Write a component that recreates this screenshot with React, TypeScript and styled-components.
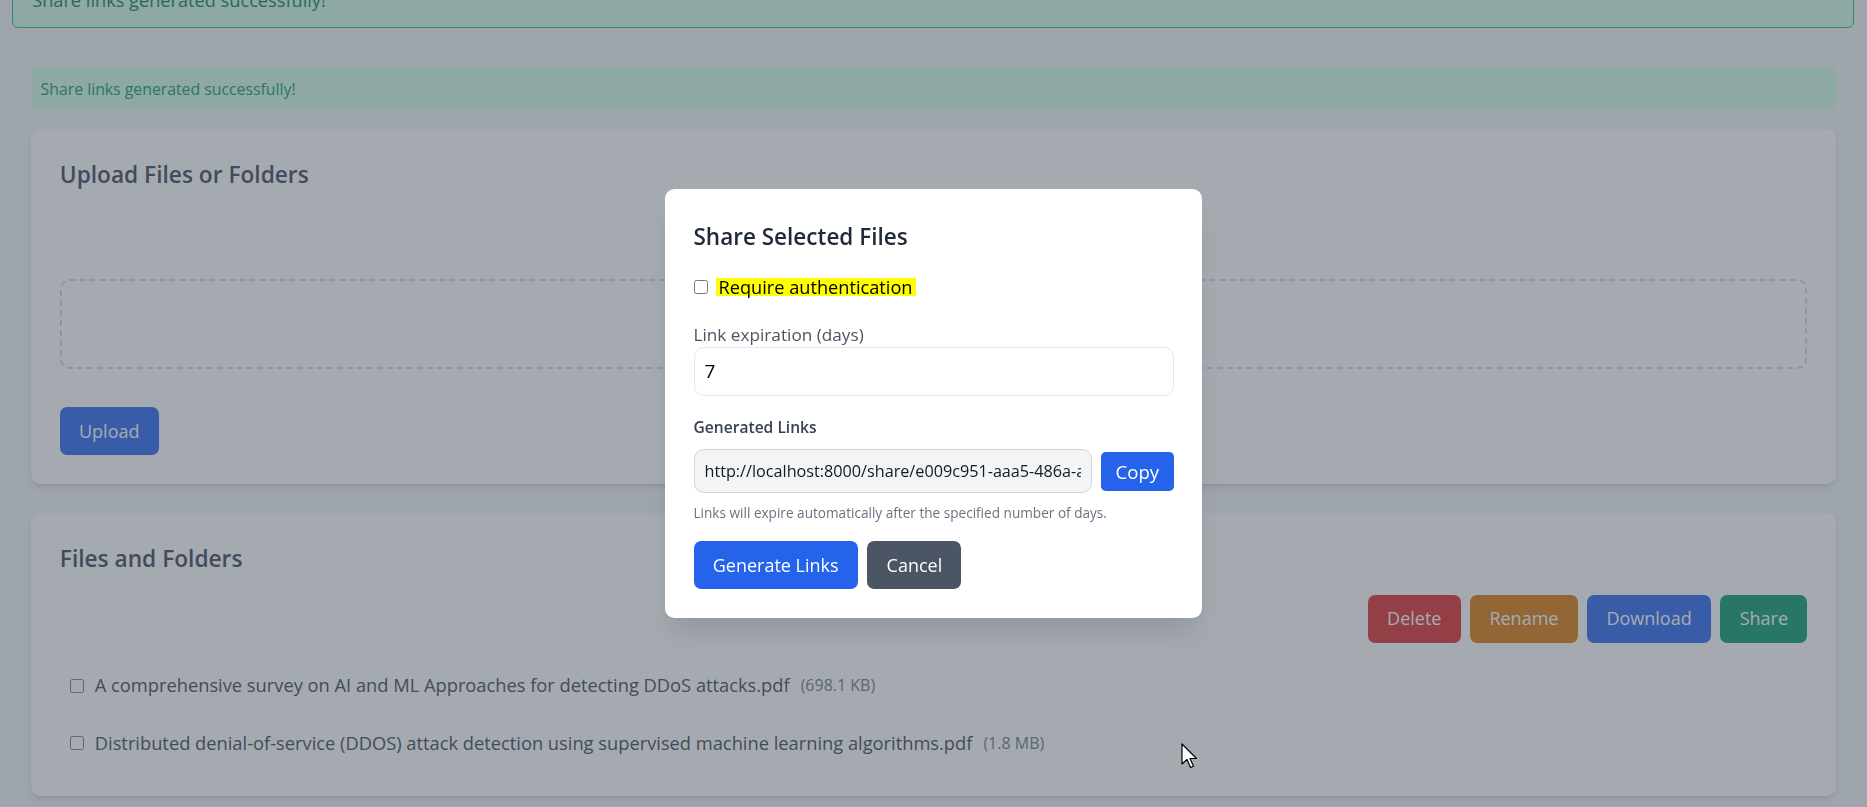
import React from "react";
import styled, { createGlobalStyle } from "styled-components";

const GlobalStyle = createGlobalStyle`
  html, body {
    margin: 0;
    padding: 0;
    background: #f3f4f6;
    font-family: "Open Sans", "Noto Sans", "Liberation Sans", sans-serif;
    color: #374151;
  }
  * { box-sizing: border-box; }
`;

const Page = styled.div`
  min-height: 807px;
  padding: 67px 31px 0 31px;
  display: flex;
  flex-direction: column;
`;

const Toast = styled.div`
  position: fixed;
  top: -26.8px;
  left: 12px;
  right: 13px;
  padding: 12px 19.2px;
  background: #d1fae5;
  border: 1px solid #10b981;
  border-radius: 6px;
  color: #047857;
  font-size: 18.2px;
  line-height: 28.8px;
`;

const Alert = styled.div`
  background: #d1fae5;
  color: #059669;
  border-radius: 4.8px;
  padding: 9.6px;
  font-size: 15.8px;
  line-height: 24px;
  margin-bottom: 19.2px;
`;

const Card = styled.section`
  background: #ffffff;
  border-radius: 9.6px;
  box-shadow: 0 4px 7px -1px rgba(0, 0, 0, 0.12), 0 2px 4px -2px rgba(0, 0, 0, 0.1);
  padding: 28.8px;
  margin-bottom: 28.8px;
  display: flex;
  flex-direction: column;

  &:last-child {
    margin-bottom: 0;
  }
`;

const CardTitle = styled.h2`
  margin: 0 0 19.2px 0;
  font-size: 22.7px;
  line-height: 33.6px;
  font-weight: 600;
  color: #374151;
`;

const DropZone = styled.div`
  margin-top: 68px;
  height: 90px;
  border: 2px dashed #d1d5db;
  border-radius: 9.6px;
`;

const Btn = styled.button<{ $bg: string }>`
  background: ${(p) => p.$bg};
  color: #ffffff;
  border: none;
  border-radius: 7.2px;
  height: 48px;
  padding: 0 19.2px;
  font-family: inherit;
  font-size: 18px;
  line-height: 28.8px;
  cursor: pointer;
`;

const UploadRow = styled.div`
  margin-top: 38.4px;
  display: flex;
`;

const ActionRow = styled.div`
  display: flex;
  justify-content: flex-end;
  gap: 9.6px;
  margin-bottom: 19.2px;
`;

const FileList = styled.ul`
  list-style: none;
  margin: 0;
  padding: 0;
  display: flex;
  flex-direction: column;
  gap: 9.6px;
`;

const FileRow = styled.li`
  display: flex;
  align-items: center;
  padding: 9.6px;
  font-size: 18.3px;
  line-height: 28.8px;
  color: #374151;
`;

const Box = styled.span`
  display: inline-block;
  width: 14px;
  height: 14px;
  border: 1px solid #767676;
  border-radius: 2.5px;
  background: #ffffff;
  flex: none;
`;

const RowBox = styled(Box)`
  margin: 0 11px 0 0.4px;
`;

const SizeText = styled.span`
  margin-left: 11px;
  font-size: 16px;
  color: #6b7280;
`;

const Overlay = styled.div`
  position: fixed;
  inset: 0;
  background: rgba(75, 85, 99, 0.5);
  display: flex;
  align-items: center;
  justify-content: center;
`;

const Modal = styled.div`
  width: 537.6px;
  background: #ffffff;
  border-radius: 9.6px;
  padding: 31px 28.8px 28.8px 28.8px;
  box-shadow: 0 20px 25px -5px rgba(0, 0, 0, 0.1);
  display: flex;
  flex-direction: column;
`;

const ModalTitle = styled.h3`
  margin: 0 0 24px 0;
  font-size: 22.5px;
  line-height: 33.6px;
  font-weight: 600;
  color: #1f2937;
`;

const CheckRow = styled.label`
  display: flex;
  align-items: center;
  gap: 8px;
  font-size: 18.2px;
  line-height: 28.8px;
  margin-bottom: 27px;
`;

const Highlight = styled.span`
  background: #ffff00;
  color: #000000;
  padding: 0 3px;
  line-height: 18px;
`;

const FieldLabel = styled.label`
  display: block;
  font-size: 17.2px;
  line-height: 24px;
  color: #4b5563;
`;

const NumberInput = styled.div`
  height: 49px;
  border: 1px solid #e5e7eb;
  border-radius: 9.6px;
  padding: 0 10px;
  display: flex;
  align-items: center;
  font-size: 19px;
  color: #000000;
  margin-bottom: 19.2px;
`;

const SectionLabel = styled.div`
  font-size: 15.6px;
  line-height: 24px;
  font-weight: 600;
  color: #374151;
  margin-bottom: 10.6px;
`;

const LinkRow = styled.div`
  display: flex;
  align-items: center;
  gap: 9.6px;
`;

const LinkField = styled.div`
  flex: 1;
  min-width: 0;
  height: 44px;
  background: #f3f4f6;
  border: 1px solid #d1d5db;
  border-radius: 9.6px;
  padding: 0 10px;
  display: flex;
  align-items: center;
  overflow: hidden;
  white-space: nowrap;
  font-size: 16.2px;
  color: #111827;
`;

const LinkText = styled.span`
  overflow: hidden;
  white-space: nowrap;
  text-overflow: clip;
  display: block;
`;

const CopyBtn = styled.button`
  background: #2563eb;
  color: #ffffff;
  border: none;
  border-radius: 4.8px;
  height: 39px;
  padding: 0 14.4px;
  font-family: inherit;
  font-size: 18.6px;
  cursor: pointer;
`;

const Helper = styled.p`
  margin: 9.6px 0 0 0;
  font-size: 13.6px;
  line-height: 19.2px;
  color: #6b7280;
`;

const ModalActions = styled.div`
  display: flex;
  gap: 9.6px;
  margin-top: 19.2px;
`;

const Cursor = styled.svg`
  position: fixed;
  left: 1181px;
  top: 743px;
`;

const files = [
  { name: "A comprehensive survey on AI and ML Approaches for detecting DDoS attacks.pdf", size: "(698.1 KB)" },
  { name: "Distributed denial-of-service (DDOS) attack detection using supervised machine learning algorithms.pdf", size: "(1.8 MB)" },
];

export default function App() {
  return (
    <>
      <GlobalStyle />
      <Page>
        <Alert>Share links generated successfully!</Alert>
        <Card>
          <CardTitle>Upload Files or Folders</CardTitle>
          <DropZone />
          <UploadRow>
            <Btn $bg="#2563eb">Upload</Btn>
          </UploadRow>
        </Card>
        <Card>
          <CardTitle>Files and Folders</CardTitle>
          <ActionRow>
            <Btn $bg="#dc2626">Delete</Btn>
            <Btn $bg="#d97706">Rename</Btn>
            <Btn $bg="#2563eb">Download</Btn>
            <Btn $bg="#059669">Share</Btn>
          </ActionRow>
          <FileList>
            {files.map((f) => (
              <FileRow key={f.name}>
                <RowBox />
                <span>{f.name}</span>
                <SizeText>{f.size}</SizeText>
              </FileRow>
            ))}
          </FileList>
        </Card>
      </Page>
      <Toast>Share links generated successfully!</Toast>
      <Overlay>
        <Modal>
          <ModalTitle>Share Selected Files</ModalTitle>
          <CheckRow>
            <Box />
            <Highlight>Require authentication</Highlight>
          </CheckRow>
          <FieldLabel>Link expiration (days)</FieldLabel>
          <NumberInput>7</NumberInput>
          <SectionLabel>Generated Links</SectionLabel>
          <LinkRow>
            <LinkField>
              <LinkText>http://localhost:8000/share/e009c951-aaa5-486a-a3f2-7c1d0b9e4f21</LinkText>
            </LinkField>
            <CopyBtn>Copy</CopyBtn>
          </LinkRow>
          <Helper>Links will expire automatically after the specified number of days.</Helper>
          <ModalActions>
            <Btn $bg="#2563eb">Generate Links</Btn>
            <Btn $bg="#4b5563">Cancel</Btn>
          </ModalActions>
        </Modal>
      </Overlay>
      <Cursor width="20" height="28" viewBox="0 0 20 28">
        <path d="M1 1 L1 21 L6 16.5 L9.5 24.5 L12.5 23.2 L9 15.5 L15.5 15.5 Z" fill="#ffffff" stroke="#000000" strokeWidth="1.2" strokeLinejoin="round" />
      </Cursor>
    </>
  );
}
